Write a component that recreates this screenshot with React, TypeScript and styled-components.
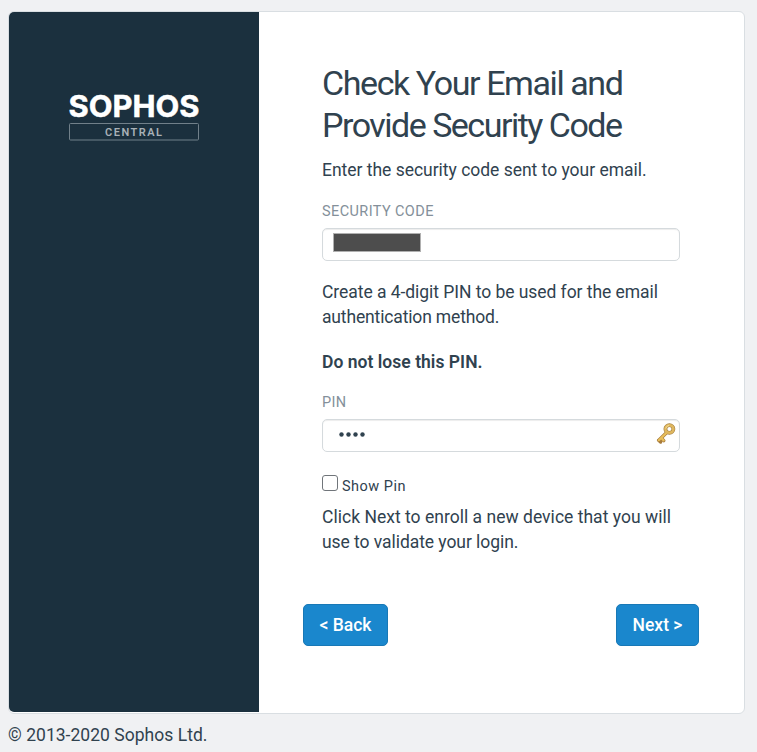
import React, { useState } from "react";
import styled, { createGlobalStyle } from "styled-components";

const GlobalStyle = createGlobalStyle`
  * { box-sizing: border-box; }
  body {
    margin: 0;
    background: #f0f1f3;
    color: #30424f;
    font-family: Roboto, "Liberation Sans", sans-serif;
    font-size: 17.5px;
    line-height: 25px;
  }
`;

const Page = styled.main`
  height: 752px;
  padding: 11px 12px 0 8px;
  overflow: hidden;
`;

const Card = styled.section`
  display: flex;
  height: 703px;
  padding-bottom: 1px;
  background: #fff;
  border: 1px solid #d9dee2;
  border-radius: 6px;
`;

const BrandPanel = styled.aside`
  flex: 0 0 250px;
  padding: 78px 0 0 56px;
  background: #1b303e;
  border-radius: 5px 0 0 5px;
`;

const Logo = styled.svg`
  display: block;
  overflow: visible;
`;

const Content = styled.div`
  flex: 1;
  padding: 50px 45px 0 44px;
`;

const Form = styled.div`
  height: 542px;
  padding: 0 19px;
`;

const Line = styled.span<{ $track?: number }>`
  display: block;
  white-space: nowrap;
  letter-spacing: ${(p) => p.$track ?? 0}px;
`;

const Title = styled.h1`
  margin: 0 0 12px;
  font-size: 34px;
  font-weight: 400;
  line-height: 42px;
`;

const Paragraph = styled.p<{ $gap: number }>`
  margin: 0 0 ${(p) => p.$gap}px;
`;

const Strong = styled(Paragraph)`
  font-weight: 600;
`;

const Label = styled.label`
  display: block;
  height: 20px;
  margin-bottom: 6px;
  color: #84909a;
  font-size: 14.5px;
  line-height: 20px;
`;

const Field = styled.div<{ $gap: number; $inset: number }>`
  display: flex;
  align-items: center;
  justify-content: space-between;
  height: 33px;
  margin-bottom: ${(p) => p.$gap}px;
  padding: 0 3px 3px ${(p) => p.$inset}px;
  background: #fff;
  border: 1px solid #d5dadd;
  border-radius: 5px;
  box-shadow: inset 0 1px 1px rgba(0, 0, 0, 0.075);
`;

const Redaction = styled.span`
  width: 88px;
  height: 19px;
  margin-bottom: 1px;
  background: #4d4d4d;
  border: 1px solid #b0b0b0;
`;

const ShowPin = styled.label`
  display: flex;
  align-items: center;
  gap: 4px;
  height: 22px;
  margin-bottom: 8px;
  font-size: 14.5px;
`;

const Checkbox = styled.input`
  appearance: none;
  width: 16px;
  height: 16px;
  margin: 0 0 7px;
  background: #fff;
  border: 1px solid #70757a;
  border-radius: 3px;
  &:checked { background: #1a87cd; }
`;

const Actions = styled.div`
  display: flex;
  justify-content: space-between;
`;

const Button = styled.button<{ $width: number }>`
  width: ${(p) => p.$width}px;
  height: 42px;
  padding: 0;
  color: #fff;
  background: #1a87cd;
  border: 1px solid #1878b6;
  border-radius: 5px;
  font: 500 17.5px/25px Roboto, "Liberation Sans", sans-serif;
`;

const Footer = styled.footer`
  padding-top: 9px;
`;

const BrandLogo = () => (
  <Logo width="140" height="56" viewBox="-4 -4 140 56" role="img" aria-label="Sophos Central">
    <text x="-0.5" y="23.3" fill="#fff" stroke="#fff" strokeWidth="0.5" fontFamily="Inter, Roboto, sans-serif" fontSize="30" fontWeight="700" textLength="131" lengthAdjust="spacingAndGlyphs">SOPHOS</text>
    <rect x="0.5" y="29.5" width="129" height="16.5" rx="1" fill="none" stroke="#71808a" />
    <text x="36" y="41.5" fill="#a8b1b7" fontFamily="Roboto, sans-serif" fontSize="11" fontWeight="600" textLength="57">CENTRAL</text>
  </Logo>
);

const KeyIcon = () => (
  <svg width="20" height="24" viewBox="0 0 20 24" aria-hidden="true">
    <g fill="none" strokeLinecap="round" strokeLinejoin="round">
      <path d="M10.5 10.8 2.8 18.2M5.2 16l2.6 2.6M2.6 18.2l2 1.8" stroke="#a87c3c" strokeWidth="3.4" />
      <ellipse cx="13.4" cy="7" rx="4" ry="3.8" stroke="#a58043" strokeWidth="3.8" />
      <path d="M10.5 10.8 2.8 18.2M5.2 16l2.4 2.4" stroke="#e8bf5c" strokeWidth="2.2" />
      <ellipse cx="13.4" cy="7" rx="4" ry="3.8" stroke="#dfb75f" strokeWidth="2.6" />
      <path d="M9.8 6.2a3.7 3.7 0 0 1 3-2.8" stroke="#f6dd92" strokeWidth="1" />
    </g>
  </svg>
);

const PinDots = () => (
  <svg width="28" height="6" viewBox="0 0 28 6" role="img" aria-label="4 digits entered">
    {[2.5, 9.5, 16.5, 23.5].map((x) => (
      <circle key={x} cx={x} cy="3.5" r="2.2" fill="#30424f" />
    ))}
  </svg>
);

export default function App() {
  const [showPin, setShowPin] = useState(false);
  return (
    <>
      <GlobalStyle />
      <Page>
        <Card>
          <BrandPanel>
            <BrandLogo />
          </BrandPanel>
          <Content>
            <Form>
              <Title>
                <Line $track={-1.42}>Check Your Email and</Line>
                <Line $track={-1.5}>Provide Security Code</Line>
              </Title>
              <Paragraph $gap={19}>
                <Line $track={-0.02}>Enter the security code sent to your email.</Line>
              </Paragraph>
              <Label><Line $track={0.4}>SECURITY CODE</Line></Label>
              <Field $gap={19} $inset={10}>
                <Redaction />
              </Field>
              <Paragraph $gap={20}>
                <Line $track={-0.05}>Create a 4-digit PIN to be used for the email</Line>
                <Line $track={-0.15}>authentication method.</Line>
              </Paragraph>
              <Strong $gap={18}>
                <Line $track={0.03}>Do not lose this PIN.</Line>
              </Strong>
              <Label><Line $track={0.3}>PIN</Line></Label>
              <Field $gap={23} $inset={16}>
                <PinDots />
                <KeyIcon />
              </Field>
              <ShowPin>
                <Checkbox type="checkbox" checked={showPin} onChange={() => setShowPin(!showPin)} />
                <Line $track={0.5}>Show Pin</Line>
              </ShowPin>
              <Paragraph $gap={0}>
                <Line $track={0.02}>Click Next to enroll a new device that you will</Line>
                <Line $track={-0.06}>use to validate your login.</Line>
              </Paragraph>
            </Form>
            <Actions>
              <Button $width={85}>&lt; Back</Button>
              <Button $width={83}>Next &gt;</Button>
            </Actions>
          </Content>
        </Card>
        <Footer><Line $track={0.03}>© 2013-2020 Sophos Ltd.</Line></Footer>
      </Page>
    </>
  );
}
